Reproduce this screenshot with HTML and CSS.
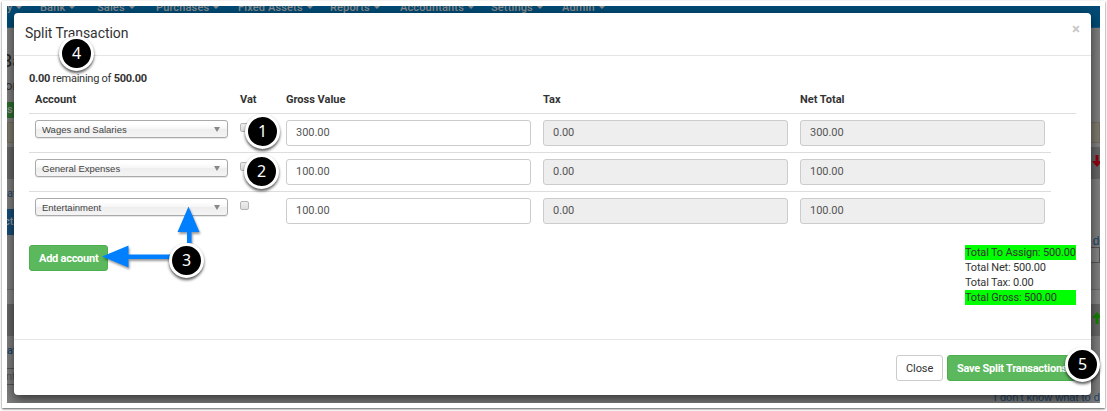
FILE: index.html
```html
<!DOCTYPE html>
<html lang="en">
<head>
<meta charset="utf-8">
<title>Split Transaction</title>
<link rel="stylesheet" href="styles.css">
</head>
<body>
<div class="frame">
  <div class="app">
    <nav class="nav">
      <span class="nav-first">y <i class="caret"></i></span>
      <span class="nav-bank">Bank <i class="caret"></i></span>
      <span class="nav-sales">Sales <i class="caret"></i></span>
      <span class="nav-purchases">Purchases <i class="caret"></i></span>
      <span class="nav-assets">Fixed Assets <i class="caret"></i></span>
      <span class="nav-reports">Reports <i class="caret"></i></span>
      <span class="nav-accountants">Accountants <i class="caret"></i></span>
      <span class="nav-settings">Settings <i class="caret"></i></span>
      <span class="nav-admin">Admin <i class="caret"></i></span>
    </nav>
    <div class="page">
      <div class="page-title">Ba</div>
      <div class="page-sub">or</div>
      <div class="page-btn">s</div>
      <div class="notice"></div>
      <div class="band"><svg width="10" height="12" viewBox="0 0 10 12"><path d="M3.5 0h3v6H10L5 12 0 6h3.5z" fill="#900010"/></svg></div>
      <div class="page-link">at</div>
      <div class="page-tab">cti</div>
      <div class="page-field"><span>do</span></div>
      <div class="page-strip"></div>
      <div class="page-strip-end"></div>
      <div class="band band-last"><svg width="10" height="12" viewBox="0 0 10 12"><path d="M3.5 12h3V6H10L5 0 0 6h3.5z" fill="#138000"/></svg></div>
      <div class="page-link page-link-bold">at</div>
      <div class="page-input">nt.</div>
      <div class="page-help">I don't know what to do</div>
    </div>
  </div>

  <section class="modal">
    <header class="modal-header">
      <h1>Split Transaction</h1>
      <span class="dismiss">×</span>
    </header>
    <div class="modal-body">
      <p class="remaining"><b>0.00</b> remaining of <b>500.00</b></p>
      <div class="row head">
        <span>Account</span><span>Vat</span><span>Gross Value</span><span>Tax</span><span>Net Total</span>
      </div>
      <div class="row">
        <div class="select">Wages and Salaries<i></i></div><div class="check"></div>
        <div class="input">300.00</div><div class="input disabled">0.00</div><div class="input disabled">300.00</div>
      </div>
      <div class="row">
        <div class="select">General Expenses<i></i></div><div class="check"></div>
        <div class="input">100.00</div><div class="input disabled">0.00</div><div class="input disabled">100.00</div>
      </div>
      <div class="row">
        <div class="select">Entertainment<i></i></div><div class="check"></div>
        <div class="input">100.00</div><div class="input disabled">0.00</div><div class="input disabled">100.00</div>
      </div>
      <div class="summary">
        <div class="btn btn-green">Add account</div>
        <div class="totals">
          <div class="lit">Total To Assign: 500.00</div>
          <div>Total Net: 500.00</div>
          <div>Total Tax: 0.00</div>
          <div class="lit">Total Gross: 500.00</div>
        </div>
      </div>
    </div>
    <footer class="modal-footer">
      <div class="btn btn-close">Close</div>
      <div class="btn btn-green btn-save">Save Split Transactions</div>
    </footer>
  </section>

  <svg class="arrows" width="1107" height="411" viewBox="0 0 1107 411">
    <g fill="#0080ff">
      <path d="M188.500 206.500L199.500 232H191.500V243H187V232H177.500Z"/>
      <path d="M102 256.500L128.500 245.500V254.500H172V259H128.500V267.500Z"/>
    </g>
  </svg>
  <div class="marker m1">1</div>
  <div class="marker m2">2</div>
  <div class="marker m3">3</div>
  <div class="marker m4">4</div>
  <div class="marker m5">5</div>
</div>
</body>
</html>
```
FILE: styles.css
```css
* { box-sizing: border-box; }
body {
  margin: 0;
  background: #fff;
  font-family: Roboto, "Liberation Sans", sans-serif;
  font-size: 11px;
  line-height: 15px;
  color: #333;
}
.frame {
  position: relative;
  width: 1107px;
  height: 411px;
  padding: 6px 7px 8px;
  overflow: hidden;
  background: #fff;
}
.frame::before {
  content: "";
  position: absolute;
  left: 2px;
  top: 1px;
  width: 1103px;
  height: 407px;
  box-shadow: 0 1px 2px rgba(0, 0, 0, .65);
}
.app {
  position: relative;
  width: 1093px;
  height: 397px;
  overflow: hidden;
  background: #7f7f7f;
}

/* Page behind the dialog */
.nav {
  display: grid;
  grid-template-columns: 33px 57px 59px 82px 92px 70px 91px 71px 1fr;
  height: 22px;
  background: #004b75;
  border-bottom: 1px solid #1a5a80;
  color: #8b8b8b;
  font-weight: 500;
  line-height: 15px;
}
.nav span { margin-top: -6px; white-space: nowrap; letter-spacing: .15px; }
.caret {
  display: inline-block;
  margin-left: 1px;
  border: 3px solid transparent;
  border-top-color: #8b8b8b;
  border-bottom: 0;
  vertical-align: 2px;
}
.page { display: flex; flex-direction: column; }
.page-title { height: 48px; margin-left: -6px; padding-top: 23px; font-size: 18px; line-height: 20px; color: #222; }
.page-sub { height: 26px; margin-left: -2px; padding-top: 2px; font-size: 13px; line-height: 16px; }
.page-btn { width: 30px; height: 16px; background: #2d6e2d; color: #999; font-weight: 500; }
.notice { height: 21px; margin-top: 4px; background: #7e7a6e; border: 1px solid #756e5d; }
.band {
  display: flex;
  justify-content: flex-end;
  align-items: center;
  height: 32px;
  margin-top: 4px;
  padding-bottom: 4px;
  background: #666;
}
.band svg { margin-right: -2px; }
.band-last { margin-top: 0; }
.page-link { height: 23px; margin-top: 7px; color: #1c456b; }
.page-tab { width: 40px; height: 26px; margin-left: -3px; padding-top: 5px; background: #174d77; color: #999; font-weight: 500; }
.page-field { height: 25px; margin-top: -4px; text-align: right; color: #1c456b; font: 12px/20px "Liberation Sans", sans-serif; }
.page-field span { display: block; margin-right: -6px; }
.page-strip { width: 60px; height: 16px; margin: -9px 0 0 auto; border: 1px solid #555; background: #858585; }
.page-strip-end { height: 15px; margin-top: 26px; border-top: 1px solid #6b6b6b; background: #858585; }
.page-link-bold { height: 25px; font-weight: 500; }
.page-input { width: 50px; height: 17px; margin-left: -1px; border: 1px solid #555; border-left: 0; color: #555; }
.page-help { margin: 5px -6px 0 0; text-align: right; color: #1c456b; font: 11px/15px "Liberation Sans", sans-serif; }

/* Dialog */
.modal {
  position: absolute;
  left: 14px;
  top: 13px;
  width: 1077px;
  height: 382px;
  background: #fff;
  border-radius: 4px;
  box-shadow: 0 4px 12px rgba(0, 0, 0, .6);
  clip-path: inset(-7px -9px -8px -7px);
}
.modal-header {
  display: flex;
  justify-content: space-between;
  height: 43px;
  padding: 11px 11px 0;
  border-bottom: 1px solid #e5e5e5;
}
.modal-header h1 { margin: 0; font-size: 14px; font-weight: 400; line-height: 19px; letter-spacing: -.05px; }
.dismiss { font-size: 15px; font-weight: 700; line-height: 11px; color: #c8c8c8; }
.modal-body { height: 283px; padding: 15px 15px 0; }
.remaining { margin: 0 0 6px; letter-spacing: -.25px; }
.row {
  display: grid;
  grid-template-columns: 205px 46px 257px 257px 245px;
  width: 1022px;
  height: 39px;
  padding: 6px 6px 0;
  border-top: 1px solid #ddd;
}
.head { width: 1047px; height: 22px; padding-top: 0; border-top: 0; border-bottom: 1px solid #ddd; font-weight: 700; }
.head + .row { height: 38px; border-top: 0; }
.select {
  display: flex;
  align-items: center;
  justify-content: space-between;
  width: 193px;
  height: 18px;
  padding: 1px 7px 0 6px;
  border: 1px solid #aaa;
  border-radius: 3px;
  background: linear-gradient(#fff 20%, #f6f6f6 50%, #eee 52%, #f4f4f4 100%);
  box-shadow: 0 1px 1px rgba(0, 0, 0, .1);
  font-family: "Liberation Sans", sans-serif;
  font-size: 9.5px;
  color: #444;
}
.select i { border: 3px solid transparent; border-top: 5px solid #888; border-bottom: 0; }
.check { width: 9px; height: 9px; margin-top: 3px; border: 1px solid #b5b5b5; border-radius: 2px; background: linear-gradient(#eee, #ddd); }
.input { width: 245px; height: 26px; padding: 4px 9px; border: 1px solid #ccc; border-radius: 3px; color: #555; letter-spacing: -.05px; }
.disabled { background: #eee; }
.summary { display: flex; justify-content: space-between; align-items: flex-start; margin-top: 15px; }
.btn { height: 26px; padding: 5px 9px; border: 1px solid #ccc; border-radius: 3px; line-height: 15px; white-space: nowrap; text-align: center; }
.btn-green { width: 79px; background: #5cb85c; border-color: #4cae4c; color: #fff; font-weight: 700; letter-spacing: -.25px; }
.totals { width: 111px; white-space: nowrap; letter-spacing: -.18px; }
.lit { background: #0f0; }
.modal-footer {
  display: flex;
  justify-content: flex-end;
  gap: 4px;
  height: 56px;
  padding: 15px 15px 0;
  border-top: 1px solid #e5e5e5;
}
.btn-close { width: 47px; letter-spacing: -.1px; }
.btn-save { width: 129px; text-align: left; }

/* Numbered callouts and arrows drawn over the dialog */
.arrows { position: absolute; left: 0; top: 0; filter: drop-shadow(1px 2px 1px rgba(0, 0, 0, .4)); }
.marker {
  position: absolute;
  width: 35px;
  height: 35px;
  border: 3px solid #fff;
  border-radius: 50%;
  background: #000;
  box-shadow: 0 2px 3px rgba(0, 0, 0, .65);
  color: #fff;
  font-family: "Noto Sans", "Open Sans", sans-serif;
  font-size: 16px;
  line-height: 28px;
  text-align: center;
}
.m1 { left: 245px; top: 114px; }
.m2 { left: 244px; top: 154px; }
.m3 { left: 169px; top: 243px; }
.m4 { left: 59px; top: 36px; }
.m5 { left: 1065px; top: 347px; }
```
